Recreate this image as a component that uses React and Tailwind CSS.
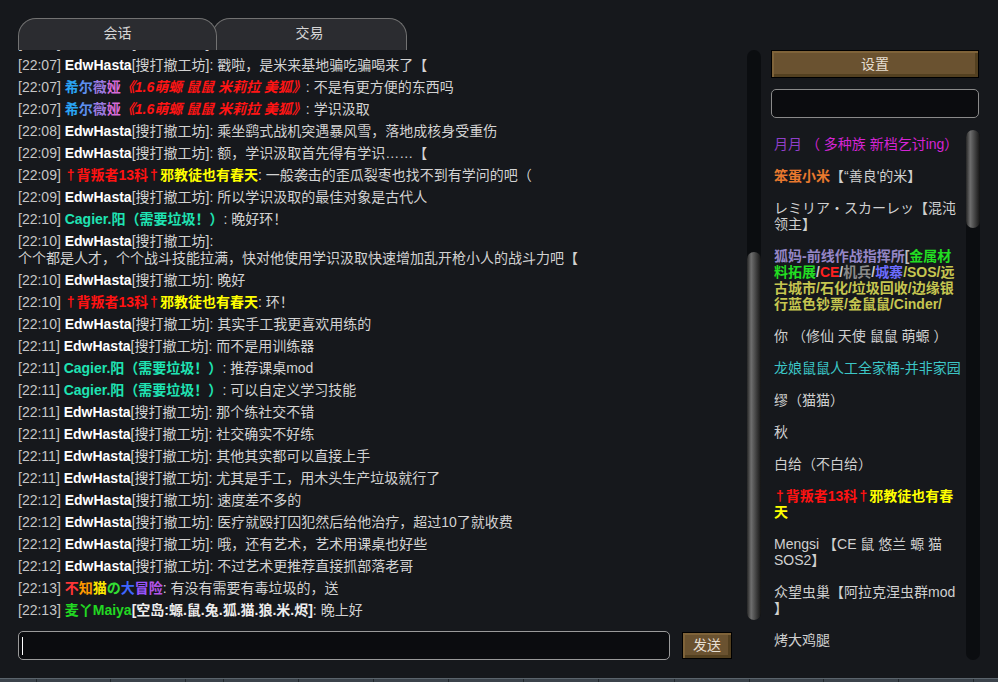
import React from "react";

const FONT = "font-['Liberation_Sans','Noto_Sans_CJK_SC',sans-serif]";

const Edw = () => (
  <>
    <span className="font-bold text-white">EdwHasta</span>
    <span>[搜打撤工坊]</span>
  </>
);

const Silvia = () => (
  <>
    <span className="font-bold text-[#2aa4f4]">希</span>
    <span className="font-bold text-[#5d8ff0]">尔</span>
    <span className="font-bold text-[#9b7ae0]">薇</span>
    <span className="font-bold text-[#d56ad6]">娅</span>
    <span className="font-bold italic text-[#ff1414]">《1.6萌螈 鼠鼠 米莉拉 美狐》</span>
  </>
);

const Dagger = () => <span className="px-[2px] font-bold text-[#ff1212]">†</span>;

const Traitor = () => (
  <>
    {" "}
    <Dagger />
    <span className="font-bold text-[#ff1212]">背叛者13科</span>
    <Dagger />
    <span className="font-bold text-[#ffff00]">邪教徒也有春天</span>
  </>
);

const Cagier = () => <span className="font-bold text-[#1fe3b3]">Cagier.阳（需要垃圾！）</span>;

const Cat = () => (
  <>
    <span className="font-bold text-[#ff3636]">不</span>
    <span className="font-bold text-[#ff9a00]">知</span>
    <span className="font-bold text-[#ffe800]">猫</span>
    <span className="font-bold text-[#33dd33]">の</span>
    <span className="font-bold text-[#3f66ff]">大</span>
    <span className="font-bold text-[#9a55ff]">冒</span>
    <span className="font-bold text-[#b655ec]">险</span>
  </>
);

const Maiya = () => (
  <>
    {" "}
    <span className="font-bold text-[#22d822]">麦丫Maiya</span>
    <span className="font-bold text-[#ececec]">[空岛:螈.鼠.兔.狐.猫.狼.米.烬]</span>
  </>
);

const lines = [
  ["22:07", <Edw />, "被打撤了也没关系"],
  ["22:07", <Edw />, "戳啦，是米来基地骗吃骗喝来了【"],
  ["22:07", <Silvia />, "不是有更方便的东西吗"],
  ["22:07", <Silvia />, "学识汲取"],
  ["22:08", <Edw />, "乘坐鹞式战机突遇暴风雪，落地成核身受重伤"],
  ["22:09", <Edw />, "额，学识汲取首先得有学识……【"],
  ["22:09", <Traitor />, "一般袭击的歪瓜裂枣也找不到有学问的吧（"],
  ["22:09", <Edw />, "所以学识汲取的最佳对象是古代人"],
  ["22:10", <Cagier />, "晚好环！"],
  ["22:10", <Edw />, null, "个个都是人才，个个战斗技能拉满，快对他使用学识汲取快速增加乱开枪小人的战斗力吧【"],
  ["22:10", <Edw />, "晚好"],
  ["22:10", <Traitor />, "环！"],
  ["22:10", <Edw />, "其实手工我更喜欢用练的"],
  ["22:11", <Edw />, "而不是用训练器"],
  ["22:11", <Cagier />, "推荐课桌mod"],
  ["22:11", <Cagier />, "可以自定义学习技能"],
  ["22:11", <Edw />, "那个练社交不错"],
  ["22:11", <Edw />, "社交确实不好练"],
  ["22:11", <Edw />, "其他其实都可以直接上手"],
  ["22:11", <Edw />, "尤其是手工，用木头生产垃圾就行了"],
  ["22:12", <Edw />, "速度差不多的"],
  ["22:12", <Edw />, "医疗就殴打囚犯然后给他治疗，超过10了就收费"],
  ["22:12", <Edw />, "哦，还有艺术，艺术用课桌也好些"],
  ["22:12", <Edw />, "不过艺术更推荐直接抓部落老哥"],
  ["22:13", <Cat />, "有没有需要有毒垃圾的，送"],
  ["22:13", <Maiya />, "晚上好"],
];

const Btn = ({ children, className }) => (
  <div
    className={`flex items-center justify-center border border-black bg-[#6a5230] text-[14px] text-[#e6dfd2] shadow-[inset_2px_2px_0_#7f6339,inset_-3px_-3px_0_#534020] ${className}`}
  >
    {children}
  </div>
);

const Track = ({ className, thumbTop, thumbH }) => (
  <div className={`relative rounded-full bg-[#0b0d10] ${className}`}>
    <div
      className="absolute left-0 right-0 rounded-full bg-[linear-gradient(to_right,#262626,#6e6e6e_30%,#3a3a3a_70%,#141414)]"
      style={{ top: thumbTop, height: thumbH }}
    />
  </div>
);

const members = [
  [
    <>
      <span className="text-[#8f3fc8]">月月 </span>
      <span className="text-[#d424d4]">（ 多种族 新档乞讨ing）</span>
    </>,
  ],
  [
    <>
      <span className="font-bold text-[#e8782e]">笨蛋小米</span>
      <span>【“善良'的米】</span>
    </>,
  ],
  ["レミリア・スカーレッ【混沌", "领主】"],
  [
    <span className="font-bold">
      <span className="text-[#9486c6]">狐妈-前线作战指挥所</span>
      <span className="text-[#bdbdbd]">[</span>
      <span className="text-[#22dd22]">金属材</span>
    </span>,
    <span className="font-bold">
      <span className="text-[#22dd22]">料拓展</span>
      <span className="text-[#c8c8c8]">/</span>
      <span className="text-[#ff2020]">CE</span>
      <span className="text-[#c8c8c8]">/</span>
      <span className="text-[#8a8a8a]">机兵</span>
      <span className="text-[#c8c8c8]">/</span>
      <span className="text-[#6c6cff]">城寨</span>
      <span className="text-[#c6c650]">/SOS/远</span>
    </span>,
    <span className="font-bold text-[#c6c650]">古城市/石化/垃圾回收/边缘银</span>,
    <span className="font-bold text-[#c6c650]">行蓝色钞票/金鼠鼠/Cinder/</span>,
  ],
  ["你 （修仙 天使 鼠鼠 萌螈 ）"],
  [<span className="text-[#3cc6c6]">龙娘鼠鼠人工全家桶-并非家园</span>],
  ["缪（猫猫）"],
  ["秋"],
  ["白给（不白给）"],
  [
    <span className="font-bold">
      {" "}
      <Dagger />
      <span className="text-[#ff1212]">背叛者13科</span>
      <Dagger />
      <span className="text-[#ffff00]">邪教徒也有春</span>
    </span>,
    <span className="font-bold text-[#ffff00]">天</span>,
  ],
  ["Mengsi 【CE 鼠 悠兰 螈 猫", "SOS2】"],
  ["众望虫巢【阿拉克涅虫群mod", "】"],
  ["烤大鸡腿"],
];

export default function App() {
  return (
    <div className={`flex h-[682px] w-[998px] flex-col overflow-hidden bg-[#16181c] ${FONT}`}>
      <div className="flex min-h-0 flex-1">
        {/* left column */}
        <div className="flex w-[761px] flex-col pl-[18px]">
          {/* tabs */}
          <div className="mt-[18px] flex h-[32px] text-[14px] text-[#d6d6d6]">
            <div className="relative z-10 flex w-[199px] items-center justify-center rounded-t-[18px] border border-b-0 border-[#727272] bg-[#2b2c30] pb-[2px]">
              会话
            </div>
            <div className="-ml-[5px] flex w-[195px] items-center justify-center rounded-t-[18px] border border-b-0 border-[#727272] bg-[#2b2c30] pb-[2px]">
              交易
            </div>
          </div>
          {/* chat */}
          <div className="flex h-[570px]">
            <div className="min-w-0 flex-1 overflow-hidden">
              <div className="-mt-[18px] text-[14px] leading-[17px] text-[#d2d2d2]">
                {lines.map(([t, who, msg, second], i) => (
                  <div key={i} className="whitespace-nowrap py-[2.5px]">
                    <span className="text-[#c6c6c6]">[{t}]</span> {who}
                    {second ? (
                      <>
                        :<br />
                        {second}
                      </>
                    ) : (
                      <>: {msg}</>
                    )}
                  </div>
                ))}
              </div>
            </div>
            <Track className="w-[14px]" thumbTop={202} thumbH={368} />
          </div>
          {/* input row */}
          <div className="mt-[11px] flex items-center">
            <div className="flex h-[29px] w-[652px] items-center rounded-[5px] border border-[#9a9a9a] bg-[#0b0c0f] pl-[3px]">
              <div className="h-[18px] w-px bg-white" />
            </div>
            <Btn className="ml-[12px] h-[27px] w-[50px]">发送</Btn>
          </div>
        </div>

        {/* right column */}
        <div className="ml-[10px] flex w-[209px] flex-col pt-[50px]">
          <Btn className="h-[28px] w-[208px]">设置</Btn>
          <div className="mt-[11px] h-[29px] w-[208px] rounded-[5px] border border-[#8a8a8a] bg-[#0b0c0f]" />
          <div className="mt-[12px] flex h-[530px]">
            <div className="w-[195px] overflow-hidden pl-[3px] pt-[6px] text-[14px] leading-[16px] text-[#d0d0d0]">
              {members.map((m, i) => (
                <div key={i} className="mb-[16px]">
                  {m.map((l, j) => (
                    <div key={j} className="whitespace-nowrap">
                      {l}
                    </div>
                  ))}
                </div>
              ))}
            </div>
            <Track className="w-[14px]" thumbTop={0} thumbH={98} />
          </div>
        </div>
      </div>

      {/* bottom strip */}
      <div className="flex h-[4px] border-t border-[#5b646c] bg-[#3b434b]">
        <div className="w-[37px] border-r border-[#22282d]" />
        <div className="w-[74px] border-r border-[#22282d]" />
        <div className="w-[75px] border-r border-[#22282d]" />
        <div className="w-[38px] border-r border-[#22282d]" />
        <div className="w-[75px] border-r border-[#22282d]" />
        <div className="w-[75px] border-r border-[#22282d]" />
        <div className="w-[75px] border-r border-[#22282d]" />
        <div className="w-[75px] border-r border-[#22282d]" />
        <div className="w-[75px] border-r border-[#22282d]" />
        <div className="w-[76px] border-r border-[#22282d]" />
        <div className="w-[75px] border-r border-[#22282d]" />
        <div className="w-[74px] border-r border-[#22282d]" />
        <div className="w-[75px] border-r border-[#22282d]" />
        <div className="w-[75px] border-r border-[#22282d]" />
      </div>
    </div>
  );
}
